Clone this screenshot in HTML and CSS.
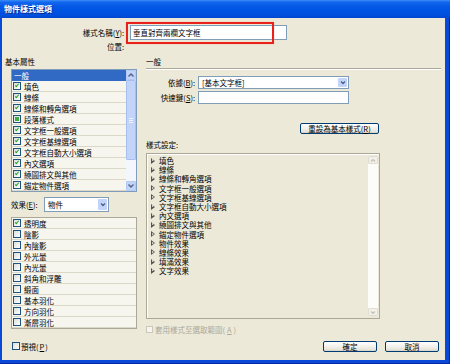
FILE: index.html
```html
<!DOCTYPE html>
<html lang="zh-Hant">
<head>
    <meta charset="UTF-8">
    <title>物件樣式選項</title>
    <link rel="stylesheet" href="styles.css">
</head>
<body>
<div class="window">
    <div class="titlebar">物件樣式選項</div>
    <div class="dialog">

        <div class="name-grid">
            <span class="field-label">樣式名稱(<u>Y</u>):</span>
            <div class="name-wrap">
                <div class="textbox name-box">垂直對齊兩欄文字框</div>
                <div class="highlight"></div>
            </div>
            <span class="field-label">位置:</span>
            <span></span>
        </div>

        <div class="columns">
            <!-- left: attribute categories + effects -->
            <div class="col-left">
                <div class="heading">基本屬性</div>
                <div class="listbox attr-list">
                    <ul class="rows">
                        <li class="row selected">一般</li>
                        <li class="row"><span class="check on"></span>填色</li>
                        <li class="row"><span class="check on"></span>線條</li>
                        <li class="row"><span class="check on"></span>線條和轉角選項</li>
                        <li class="row"><span class="check mixed"></span>段落樣式</li>
                        <li class="row"><span class="check on"></span>文字框一般選項</li>
                        <li class="row"><span class="check on"></span>文字框基線選項</li>
                        <li class="row"><span class="check on"></span>文字框自動大小選項</li>
                        <li class="row"><span class="check on"></span>內文選項</li>
                        <li class="row"><span class="check on"></span>繞圖排文與其他</li>
                        <li class="row"><span class="check on"></span>錨定物件選項</li>
                    </ul>
                    <div class="vscroll">
                        <span class="scroll-btn"><svg width="8" height="6" viewBox="0 0 8 6"><path d="M1.5 4.5 L4 2 L6.5 4.5" fill="none" stroke="#4d6185" stroke-width="1.4"/></svg></span>
                        <span class="scroll-thumb"><i></i><i></i><i></i></span>
                        <span class="scroll-track"></span>
                        <span class="scroll-btn"><svg width="8" height="6" viewBox="0 0 8 6"><path d="M1.5 1.5 L4 4 L6.5 1.5" fill="none" stroke="#4d6185" stroke-width="1.4"/></svg></span>
                    </div>
                </div>

                <div class="effect-row">
                    <span class="effect-label">效果(<u>E</u>):</span>
                    <div class="combo effect-combo">
                        <span>物件</span>
                        <span class="combo-btn"><svg width="6" height="5" viewBox="0 0 6 5"><path d="M1 1.5 L3 3.5 L5 1.5" fill="none" stroke="#4d6185" stroke-width="1.3"/></svg></span>
                    </div>
                </div>

                <ul class="listbox effect-list">
                    <li class="row"><span class="check on"></span>透明度</li>
                    <li class="row"><span class="check"></span>陰影</li>
                    <li class="row"><span class="check"></span>內陰影</li>
                    <li class="row"><span class="check"></span>外光暈</li>
                    <li class="row"><span class="check"></span>內光暈</li>
                    <li class="row"><span class="check"></span>斜角和浮雕</li>
                    <li class="row"><span class="check"></span>緞面</li>
                    <li class="row"><span class="check"></span>基本羽化</li>
                    <li class="row"><span class="check"></span>方向羽化</li>
                    <li class="row"><span class="check"></span>漸層羽化</li>
                </ul>

                <div class="check-row preview"><span class="check"></span>預視(<u>P</u>)</div>
            </div>

            <!-- right: general settings -->
            <div class="col-right">
                <div class="heading">一般</div>
                <div class="separator"></div>

                <div class="form-grid">
                    <span class="field-label">依據(<u>B</u>):</span>
                    <div class="combo">
                        <span>[基本文字框]</span>
                        <span class="combo-btn"><svg width="6" height="5" viewBox="0 0 6 5"><path d="M1 1.5 L3 3.5 L5 1.5" fill="none" stroke="#4d6185" stroke-width="1.3"/></svg></span>
                    </div>
                    <span class="field-label">快速鍵(<u>S</u>):</span>
                    <div class="textbox"></div>
                </div>

                <button class="btn reset-btn">重設為基本樣式(<u>R</u>)</button>

                <div class="heading settings-head">樣式設定:</div>
                <div class="tree-box">
                    <ul class="tree">
                        <li><span class="twisty"></span>填色</li>
                        <li><span class="twisty"></span>線條</li>
                        <li><span class="twisty"></span>線條和轉角選項</li>
                        <li><span class="twisty"></span>文字框一般選項</li>
                        <li><span class="twisty"></span>文字框基線選項</li>
                        <li><span class="twisty"></span>文字框自動大小選項</li>
                        <li><span class="twisty"></span>內文選項</li>
                        <li><span class="twisty"></span>繞圖排文與其他</li>
                        <li><span class="twisty"></span>錨定物件選項</li>
                        <li><span class="twisty"></span>物件效果</li>
                        <li><span class="twisty"></span>線條效果</li>
                        <li><span class="twisty"></span>填滿效果</li>
                        <li><span class="twisty"></span>文字效果</li>
                    </ul>
                    <div class="tree-scroll">
                        <span class="scroll-btn off"><svg width="6" height="5" viewBox="0 0 6 5"><path d="M1 3.5 L3 1.5 L5 3.5" fill="none" stroke="#c2c0b4" stroke-width="1.2"/></svg></span>
                        <span class="scroll-btn off"><svg width="6" height="5" viewBox="0 0 6 5"><path d="M1 1.5 L3 3.5 L5 1.5" fill="none" stroke="#c2c0b4" stroke-width="1.2"/></svg></span>
                    </div>
                </div>

                <div class="check-row disabled"><span class="check"></span>套用樣式至選取範圍(<u>A</u>)</div>

                <div class="actions">
                    <button class="btn">確定</button>
                    <button class="btn">取消</button>
                </div>
            </div>
        </div>
    </div>
</div>
</body>
</html>
```

FILE: styles.css
```css
:root {
    --face: #ece9d8;
    --xp-blue: #0a48d8;
    --field-border: #7f9db9;
    --row-line: #dcd8c9;
    --row-bg: #f6f5ee;
    --select: #316ac5;
    --scroll: #c3d4fb;
}

*, *::before, *::after {
    box-sizing: border-box;
    margin: 0;
    padding: 0;
}

body {
    width: 450px;
    height: 364px;
    overflow: hidden;
    font-family: "Noto Sans CJK TC", "Noto Sans", sans-serif;
    font-size: 7.5px;
    line-height: 9px;
    color: #000;
    background: var(--face);
}

ul { list-style: none; }
u { text-decoration: underline; }

.window {
    width: 450px;
    height: 364px;
    display: flex;
    flex-direction: column;
    background: var(--xp-blue);
    box-shadow: inset -1px 0 #0028a8, inset 0 -1px #0028a8;
}

.titlebar {
    height: 18px;
    line-height: 18px;
    padding-left: 4px;
    color: #fff;
    font-size: 8px;
    font-weight: 700;
    text-shadow: 1px 1px 0 #0a2a8a;
    background: linear-gradient(#3c8cf7 0%, #1367ee 12%, #0558e6 35%, #0054e3 60%, #004fdc 85%, #0046d0 100%);
}

.dialog {
    flex: 1;
    margin: 0 5px 4px 2px;
    padding-top: 7px;
    background: var(--face);
}

/* name + location */
.name-grid {
    display: grid;
    grid-template-columns: 122px 157px;
    grid-template-rows: 15px 10px;
    column-gap: 6px;
    row-gap: 2px;
}
.field-label {
    text-align: right;
    line-height: 10px;
    align-self: center;
    white-space: nowrap;
}
.name-wrap { position: relative; }
.textbox {
    height: 100%;
    background: #fff;
    border: 1px solid var(--field-border);
    padding-left: 2px;
    line-height: 11px;
}
.name-box { line-height: 13px; }
.highlight {
    position: absolute;
    left: -4px;
    top: -3px;
    width: 148px;
    height: 22px;
    border: 2px solid #e8221b;
    box-shadow: 0 0 1px #f7a39c;
}

.columns {
    display: flex;
    margin-top: 5px;
}

.heading {
    line-height: 10px;
    height: 10px;
}

/* left column */
.col-left {
    width: 144px;
    padding-left: 3px;
}
.listbox {
    margin: 2px 0 0 6px;
    width: 126px;
    background: var(--row-bg);
    border: 1px solid var(--field-border);
}
.attr-list {
    display: flex;
    height: 123px;
}
.rows { flex: 1; }
.row {
    height: 11px;
    line-height: 9px;
    display: flex;
    align-items: center;
    gap: 3px;
    padding-left: 1px;
    border-bottom: 1px solid var(--row-line);
    white-space: nowrap;
}
.row.selected {
    background: var(--select);
    color: #fff;
    padding-left: 2px;
    border-bottom-color: var(--select);
}

.check {
    flex: none;
    width: 8px;
    height: 8px;
    border: 1px solid #1c5180;
    background: linear-gradient(135deg, #dcdcd7, #fff);
    position: relative;
}
.check.on::after {
    content: "";
    position: absolute;
    left: 1px;
    top: 0;
    width: 2px;
    height: 4px;
    border: solid #21a121;
    border-width: 0 1.5px 1.5px 0;
    transform: translate(1px, 0) rotate(40deg);
}
.check.mixed::after {
    content: "";
    position: absolute;
    left: 1px;
    top: 1px;
    width: 4px;
    height: 4px;
    background: #3fae3f;
}

.vscroll {
    width: 10px;
    display: flex;
    flex-direction: column;
    background: #f4f6fd;
}
.scroll-btn {
    height: 10px;
    display: flex;
    align-items: center;
    justify-content: center;
    background: var(--scroll);
    border: 1px solid #b4c8f6;
    border-radius: 1px;
}
.scroll-thumb {
    height: 80px;
    display: flex;
    flex-direction: column;
    align-items: center;
    justify-content: center;
    gap: 1px;
    background: var(--scroll);
    border: 1px solid #a9bff0;
    border-radius: 1px;
}
.scroll-thumb i {
    width: 4px;
    height: 1px;
    background: #eef3fe;
}
.scroll-track { flex: 1; }

.effect-row {
    display: flex;
    align-items: center;
    height: 15px;
    margin-top: 5px;
    padding-left: 6px;
}
.effect-label {
    width: 33px;
    white-space: nowrap;
}
.combo {
    display: flex;
    align-items: center;
    height: 100%;
    background: #fff;
    border: 1px solid var(--field-border);
    padding-left: 3px;
}
.effect-combo { width: 65px; }
.combo-btn {
    margin-left: auto;
    width: 9px;
    height: calc(100% - 2px);
    margin-right: 1px;
    display: flex;
    align-items: center;
    justify-content: center;
    background: var(--scroll);
    border-radius: 1px;
}

.effect-list {
    margin-top: 5px;
    height: 112px;
    border-color: #aca899;
}

.check-row {
    display: flex;
    align-items: center;
    height: 10px;
    white-space: nowrap;
}
.preview {
    margin-top: 12px;
    padding-left: 7px;
    gap: 1px;
}

/* right column */
.col-right {
    width: 295px;
    display: flex;
    flex-direction: column;
    align-items: flex-start;
}
.separator {
    width: 100%;
    height: 2px;
    margin-top: 1px;
    border-top: 1px solid #aca899;
    border-bottom: 1px solid #fff;
}
.form-grid {
    display: grid;
    grid-template-columns: 49px 151px;
    grid-template-rows: 13px 13px;
    column-gap: 3px;
    row-gap: 2px;
    margin-top: 6px;
}

.btn {
    height: 11px;
    font-family: inherit;
    font-size: 7.5px;
    line-height: 9px;
    color: #000;
    border: 1px solid #003c74;
    border-radius: 2px;
    background: linear-gradient(#fff 0%, #f4f3ee 45%, #e6e3d8 85%, #d6d0c5 100%);
    cursor: pointer;
}
.reset-btn {
    width: 79px;
    margin: 19px 0 0 154px;
}

.settings-head { margin-top: 6px; }

.tree-box {
    display: flex;
    width: 234px;
    height: 166px;
    margin-top: 3px;
    border: 1px solid #aca899;
    box-shadow: inset 1px 1px #fff;
}
.tree {
    flex: 1;
    padding: 2px 0 0 4px;
}
.tree li {
    height: 9.2px;
    line-height: 9px;
    display: flex;
    align-items: center;
    gap: 4px;
    white-space: nowrap;
}
.twisty {
    width: 0;
    height: 0;
    border-top: 3px solid transparent;
    border-bottom: 3px solid transparent;
    border-left: 4px solid #555;
    position: relative;
}
.twisty::after {
    content: "";
    position: absolute;
    left: -3.5px;
    top: -1.6px;
    border-top: 1.6px solid transparent;
    border-bottom: 1.6px solid transparent;
    border-left: 2.2px solid #f3f2ea;
}
.tree-scroll {
    width: 10px;
    margin: 2px 1px 2px 0;
    display: flex;
    flex-direction: column;
    justify-content: space-between;
    background: #fcfcf9;
}
.scroll-btn.off {
    height: 8px;
    background: #f1f0ea;
    border-color: #e0ded3;
}

.disabled {
    margin-top: 5px;
    gap: 2px;
    color: #aca899;
}
.disabled .check {
    width: 7px;
    height: 7px;
    border-color: #cac8bb;
    background: #f5f4ef;
}

.actions {
    align-self: stretch;
    display: flex;
    justify-content: flex-end;
    gap: 8px;
    margin-top: 7px;
    padding-right: 2px;
}
.actions .btn { width: 54px; }
```
